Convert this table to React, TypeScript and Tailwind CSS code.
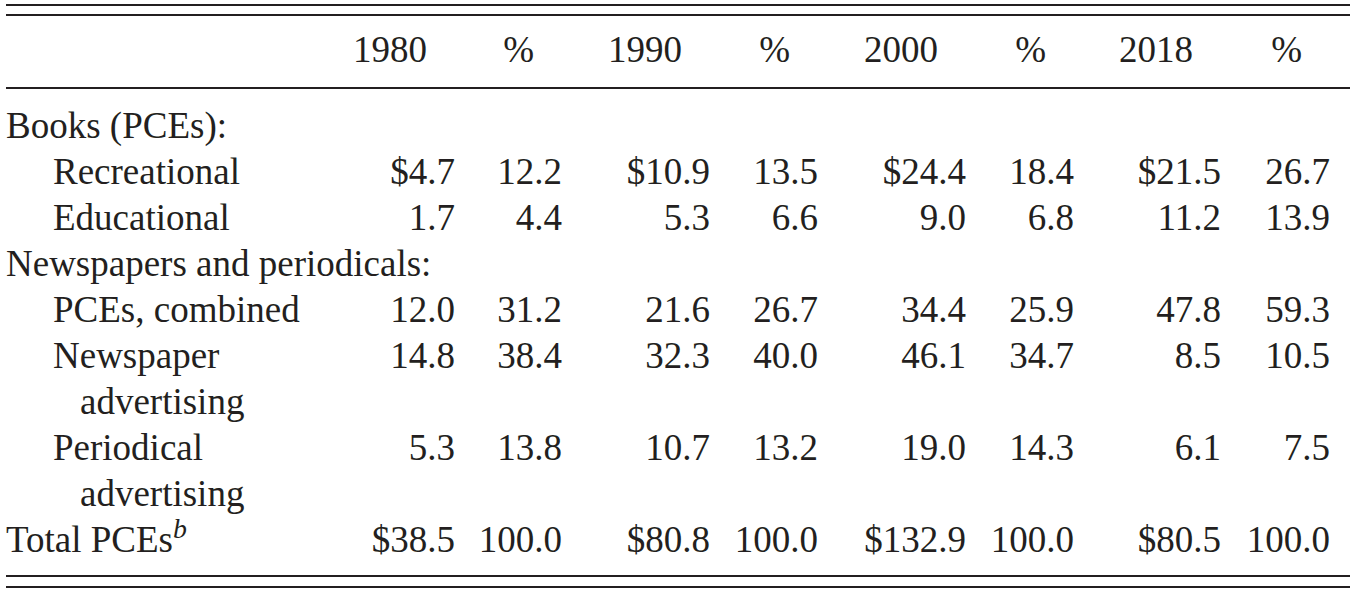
type Row = {
  label: string[];
  indent?: boolean;
  sup?: string;
  values?: string[];
};

const years = ['1980', '%', '1990', '%', '2000', '%', '2018', '%'];

const rows: Row[] = [
  { label: ['Books (PCEs):'] },
  { label: ['Recreational'], indent: true, values: ['$4.7', '12.2', '$10.9', '13.5', '$24.4', '18.4', '$21.5', '26.7'] },
  { label: ['Educational'], indent: true, values: ['1.7', '4.4', '5.3', '6.6', '9.0', '6.8', '11.2', '13.9'] },
  { label: ['Newspapers and periodicals:'] },
  { label: ['PCEs, combined'], indent: true, values: ['12.0', '31.2', '21.6', '26.7', '34.4', '25.9', '47.8', '59.3'] },
  { label: ['Newspaper', 'advertising'], indent: true, values: ['14.8', '38.4', '32.3', '40.0', '46.1', '34.7', '8.5', '10.5'] },
  { label: ['Periodical', 'advertising'], indent: true, values: ['5.3', '13.8', '10.7', '13.2', '19.0', '14.3', '6.1', '7.5'] },
  { label: ['Total PCEs'], sup: 'b', values: ['$38.5', '100.0', '$80.8', '100.0', '$132.9', '100.0', '$80.5', '100.0'] },
];

const cols = 'grid grid-cols-[334px_115px_107px_148px_108px_148px_108px_147px_109px]';

export default function App() {
  return (
    <div className="min-h-screen bg-white pt-[4px] font-[family-name:Liberation_Serif,Times_New_Roman,serif] text-[37px] leading-[46px] text-[#231f20]">
      <div className="ml-[6px] w-[1344px]">
        <div className="border-t-2 border-[#231f20]" />
        <div className="mt-[8px] border-t-2 border-[#231f20]" />

        {/* header */}
        <div className={`${cols} pt-[11px] pb-[14px] border-b-2 border-[#231f20]`}>
          <div />
          {years.map((y, i) => (
            <div key={i} className="text-right whitespace-nowrap pr-[28px]">{y}</div>
          ))}
        </div>

        {/* body */}
        <div className={`${cols} pt-[14px] pb-[12px] border-b-2 border-[#231f20]`}>
          {rows.map((r, i) =>
            r.values ? (
              <div key={i} className="contents">
                <div className={r.indent ? 'pl-[47px]' : ''}>
                  <div className="whitespace-nowrap">
                    {r.label[0]}
                    {r.sup && <sup className="italic">{r.sup}</sup>}
                  </div>
                  {r.label[1] && <div className="pl-[27px] whitespace-nowrap">{r.label[1]}</div>}
                </div>
                {r.values.map((v, j) => (
                  <div key={j} className="text-right whitespace-nowrap">{v}</div>
                ))}
              </div>
            ) : (
              <div key={i} className="col-span-9 whitespace-nowrap">{r.label[0]}</div>
            )
          )}
        </div>
        <div className="mt-[9px] border-t-2 border-[#231f20]" />
      </div>
    </div>
  );
}
